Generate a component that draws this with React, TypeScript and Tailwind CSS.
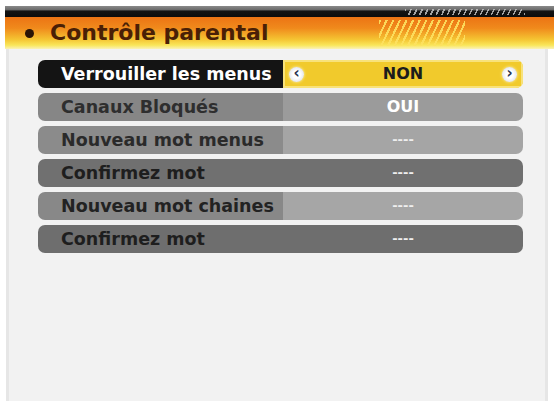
import { ReactNode } from 'react';

type Row = {
  label: string;
  value: string;
  labelBg: string;
  valueBg: string;
  labelText: string;
  valueText: string;
  selected?: boolean;
};

const rows: Row[] = [
  { label: 'Verrouiller les menus', value: 'NON', labelBg: 'bg-[#141414]', valueBg: 'bg-[#f1ca2c]', labelText: 'text-white', valueText: 'text-[#1c1c1c] text-[16px]', selected: true },
  { label: 'Canaux Bloqués', value: 'OUI', labelBg: 'bg-[#868686]', valueBg: 'bg-[#9b9b9b]', labelText: 'text-[#2e2e2e]', valueText: 'text-white text-[16px]' },
  { label: 'Nouveau mot menus', value: '----', labelBg: 'bg-[#8b8b8b]', valueBg: 'bg-[#a5a5a5]', labelText: 'text-[#2a2a2a]', valueText: 'text-[#eeeeee] text-[13px]' },
  { label: 'Confirmez mot', value: '----', labelBg: 'bg-[#707070]', valueBg: 'bg-[#707070]', labelText: 'text-[#1e1e1e]', valueText: 'text-[#eeeeee] text-[13px]' },
  { label: 'Nouveau mot chaines', value: '----', labelBg: 'bg-[#888888]', valueBg: 'bg-[#a6a6a6]', labelText: 'text-[#222222]', valueText: 'text-[#eeeeee] text-[13px]' },
  { label: 'Confirmez mot', value: '----', labelBg: 'bg-[#6e6e6e]', valueBg: 'bg-[#6e6e6e]', labelText: 'text-[#1e1e1e]', valueText: 'text-[#eeeeee] text-[13px]' },
];

function Arrow({ children }: { children: ReactNode }) {
  return (
    <span className="flex items-center justify-center w-[15px] h-[15px] rounded-full bg-[radial-gradient(circle,#ffffff_35%,#cfd3e0_100%)] shadow-[0_0_3px_#fff6c0] text-[#28324e] text-[15px] font-bold leading-none pb-[2px]">
      {children}
    </span>
  );
}

function MenuRow({ row }: { row: Row }) {
  return (
    <div className="flex h-[28px] rounded-[7px] overflow-hidden">
      <div className={`w-[245px] flex items-center pl-[23px] ${row.labelBg}`}>
        <span className={`text-[17.5px] font-bold ${row.labelText}`}>{row.label}</span>
      </div>
      <div className={`flex-1 flex items-center justify-between px-[6px] ${row.valueBg} ${row.selected ? 'shadow-[inset_0_0_0_2px_#f8e27a]' : ''}`}>
        {row.selected ? <Arrow>‹</Arrow> : <span className="w-[15px]" />}
        <span className={`font-bold ${row.valueText}`}>{row.value}</span>
        {row.selected ? <Arrow>›</Arrow> : <span className="w-[15px]" />}
      </div>
    </div>
  );
}

export default function App() {
  return (
    <div className="w-[554px] h-[401px] bg-white flex flex-col overflow-hidden" style={{ fontFamily: '"DejaVu Sans", Verdana, sans-serif' }}>
      <div className="h-[6px] shrink-0" />

      {/* dark top bar */}
      <div className="relative ml-[5px] h-[11px] shrink-0 bg-[linear-gradient(to_bottom,#8a8a8a_0%,#6a6a6a_35%,#141414_45%,#0c0c0c_100%)]">
        <div className="absolute left-[400px] top-[3px] w-[120px] h-[6px] bg-[repeating-linear-gradient(115deg,#c8c8c8_0px,#c8c8c8_1.5px,transparent_1.5px,transparent_5px)] opacity-80" />
      </div>

      {/* orange title bar */}
      <div className="relative ml-[5px] h-[32px] shrink-0 bg-[linear-gradient(to_bottom,#ec7414_0%,#f08a1c_35%,#f5c432_70%,#f9e65a_88%,#fbf2b8_100%)] flex items-center">
        <div className="absolute left-[374px] top-[3px] w-[86px] h-[26px] bg-[repeating-linear-gradient(115deg,#fde160_0px,#fde160_2px,transparent_2px,transparent_6px)] opacity-90" />
        <span className="ml-[20px] w-[9px] h-[9px] rounded-full bg-[#2a1406]" />
        <span className="ml-[16px] text-[22px] font-bold text-[#4a1f06] leading-none">Contrôle parental</span>
      </div>

      {/* panel */}
      <div className="flex-1 mx-[6px] bg-[#f2f2f2] border-l-[3px] border-r-[3px] border-[#e6e6e6] pt-[11px] pl-[29px] pr-[22px]">
        <div className="flex flex-col gap-[5px]">
          {rows.map((row, i) => (
            <MenuRow key={i} row={row} />
          ))}
        </div>
      </div>
    </div>
  );
}
